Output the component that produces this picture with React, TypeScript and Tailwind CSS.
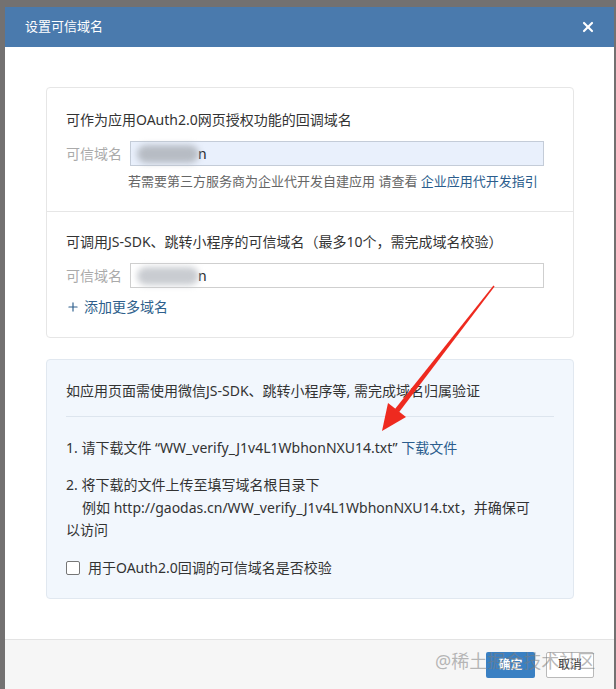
import { Plus, X } from "lucide-react";

const font = "font-['Noto_Sans','Noto_Sans_CJK_SC',sans-serif]";

function BlurredValue({ light }: { light?: boolean }) {
  return (
    <div className="flex items-center h-full pl-[6px] relative">
      <div
        className={`w-[62px] h-[18px] rounded-full blur-[3px] ${light ? "bg-[#c9ccd1]" : "bg-[#b7bcc4]"}`}
      />
      <span className="text-[14px] text-[#222] -ml-[1px]">n</span>
    </div>
  );
}

function DomainRow({ autofill, light }: { autofill?: boolean; light?: boolean }) {
  return (
    <div className="flex items-center">
      <span className="w-[64px] text-[14px] text-[#aaaaaa] leading-[20px]">可信域名</span>
      <div
        className={`w-[414px] h-[25px] border ${autofill ? "bg-[#e9f0fc] border-[#c4ccd8]" : "bg-white border-[#cfcfcf]"}`}
      >
        <BlurredValue light={light} />
      </div>
    </div>
  );
}

function Arrow() {
  // red hand-drawn style arrow pointing at the filename
  return (
    <svg className="absolute left-0 top-0 pointer-events-none" width="616" height="689">
      <polygon points="494.6,286.5 493.4,285.5 395,409 399,412.2" fill="#ee2a1f" />
      <polygon points="382,431 388,403 406,417" fill="#ee2a1f" />
    </svg>
  );
}

export default function App() {
  return (
    <div className={`relative w-[616px] h-[689px] overflow-hidden bg-[#737171] pt-[7px] pl-[5px] pr-[2px] ${font}`}>
      <div className="flex flex-col h-[682px] bg-white">
        <div className="h-[40px] shrink-0 bg-[#4a7aad] flex items-center justify-between pl-[20px] pr-[18px]">
          <span className="text-[13px] text-white">设置可信域名</span>
          <X size={16} strokeWidth={3.2} className="text-white" />
        </div>

        <div className="flex-1 pt-[40px] pl-[41px] pr-[40px]">
          <div className="border border-[#e6e6e6] rounded-[4px]">
            <div className="pt-[22px] pb-[22px] px-[19px]">
              <div className="text-[14px] leading-[20px] text-[#333]">可作为应用OAuth2.0网页授权功能的回调域名</div>
              <div className="mt-[11px]">
                <DomainRow autofill />
              </div>
              <div className="mt-[7px] pl-[62px] text-[13px] leading-[16px] text-[#666] whitespace-nowrap">
                若需要第三方服务商为企业代开发自建应用 请查看 <span className="text-[#2b5d8d]">企业应用代开发指引</span>
              </div>
            </div>
            <div className="border-t border-[#e6e6e6] pt-[20px] pb-[20px] px-[19px]">
              <div className="text-[14px] leading-[20px] text-[#333] whitespace-nowrap">
                可调用JS-SDK、跳转小程序的可信域名（最多10个，需完成域名校验）
              </div>
              <div className="mt-[11px]">
                <DomainRow light />
              </div>
              <div className="mt-[9px] flex items-center gap-[4px] text-[14px] leading-[20px] text-[#2e5f8c]">
                <Plus size={14} strokeWidth={2} />
                <span>添加更多域名</span>
              </div>
            </div>
          </div>

          <div className="mt-[21px] border border-[#e1e8f0] rounded-[4px] bg-[#f2f7fd] pt-[21px] pb-[20px] px-[19px] text-[14px] text-[#333]">
            <div className="leading-[20px] whitespace-nowrap">如应用页面需使用微信JS-SDK、跳转小程序等, 需完成域名归属验证</div>
            <div className="mt-[15px] border-t border-[#dde5ee]" />
            <div className="mt-[21px] leading-[20px] whitespace-nowrap">
              1. 请下载文件 “WW_verify_J1v4L1WbhonNXU14.txt” <span className="text-[#2b5d8d]">下载文件</span>
            </div>
            <div className="mt-[16px] leading-[22.5px] whitespace-nowrap">
              <div>2. 将下载的文件上传至填写域名根目录下</div>
              <div className="pl-[16px]">例如 http://gaodas.cn/WW_verify_J1v4L1WbhonNXU14.txt，并确保可</div>
              <div>以访问</div>
            </div>
            <label className="mt-[16px] flex items-center gap-[8px] leading-[20px]">
              <span className="w-[14px] h-[14px] border border-[#767676] rounded-[2px] bg-white" />
              <span>用于OAuth2.0回调的可信域名是否校验</span>
            </label>
          </div>
        </div>

        <div className="h-[50px] shrink-0 border-t border-[#e3e3e3] bg-[#f6f6f6] flex justify-end items-start gap-[11px] pt-[12px] pr-[20px]">
          <button className="w-[49px] h-[26px] rounded-[2px] bg-[#3a80c3] text-white text-[12px] font-bold">确定</button>
          <button className="w-[48px] h-[26px] rounded-[2px] bg-white border border-[#b9b9b9] text-[#333] text-[12px]">取消</button>
        </div>
      </div>

      <div className="absolute left-[435px] top-[650px] text-[18px] leading-[22px] text-[rgba(125,125,125,0.55)] pointer-events-none whitespace-nowrap">
        @稀土掘金技术社区
      </div>
      <Arrow />
    </div>
  );
}
